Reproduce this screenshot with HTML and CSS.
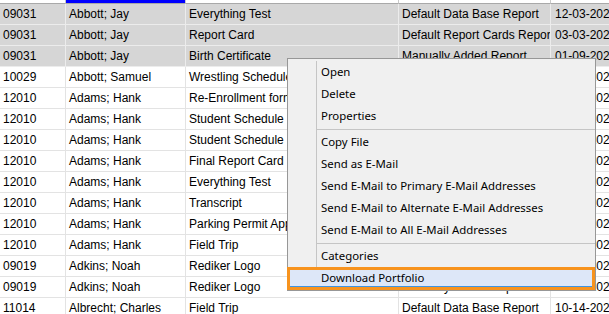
FILE: index.html
```html
<!DOCTYPE html>
<html lang="en">
<head>
    <meta charset="UTF-8">
    <meta name="viewport" content="width=device-width, initial-scale=1.0">
    <title>Student Reports</title>
    <link rel="stylesheet" href="styles.css">
</head>
<body>

    <div class="grid">
        <!-- Header strip (mostly scrolled away) -->
        <div class="row head">
            <div class="cell"></div>
            <div class="cell sorted"></div>
            <div class="cell"></div>
            <div class="cell"></div>
            <div class="cell"></div>
        </div>

        <div class="row sel">
            <div class="cell">09031</div>
            <div class="cell">Abbott; Jay</div>
            <div class="cell">Everything Test</div>
            <div class="cell">Default Data Base Report</div>
            <div class="cell">12-03-2020</div>
        </div>
        <div class="row sel">
            <div class="cell">09031</div>
            <div class="cell">Abbott; Jay</div>
            <div class="cell">Report Card</div>
            <div class="cell">Default Report Cards Report</div>
            <div class="cell">03-03-2021</div>
        </div>
        <div class="row sel">
            <div class="cell">09031</div>
            <div class="cell">Abbott; Jay</div>
            <div class="cell">Birth Certificate</div>
            <div class="cell">Manually Added Report</div>
            <div class="cell">01-09-2021</div>
        </div>
        <div class="row">
            <div class="cell">10029</div>
            <div class="cell">Abbott; Samuel</div>
            <div class="cell">Wrestling Schedule</div>
            <div class="cell">Manually Added Report</div>
            <div class="cell">10-14-2021</div>
        </div>
        <div class="row">
            <div class="cell">12010</div>
            <div class="cell">Adams; Hank</div>
            <div class="cell">Re-Enrollment form</div>
            <div class="cell">Manually Added Report</div>
            <div class="cell">10-14-2021</div>
        </div>
        <div class="row">
            <div class="cell">12010</div>
            <div class="cell">Adams; Hank</div>
            <div class="cell">Student Schedule</div>
            <div class="cell">Default Data Base Report</div>
            <div class="cell">10-14-2021</div>
        </div>
        <div class="row">
            <div class="cell">12010</div>
            <div class="cell">Adams; Hank</div>
            <div class="cell">Student Schedule</div>
            <div class="cell">Default Data Base Report</div>
            <div class="cell">10-14-2021</div>
        </div>
        <div class="row">
            <div class="cell">12010</div>
            <div class="cell">Adams; Hank</div>
            <div class="cell">Final Report Card</div>
            <div class="cell">Default Report Cards Report</div>
            <div class="cell">10-14-2021</div>
        </div>
        <div class="row">
            <div class="cell">12010</div>
            <div class="cell">Adams; Hank</div>
            <div class="cell">Everything Test</div>
            <div class="cell">Default Data Base Report</div>
            <div class="cell">10-14-2021</div>
        </div>
        <div class="row">
            <div class="cell">12010</div>
            <div class="cell">Adams; Hank</div>
            <div class="cell">Transcript</div>
            <div class="cell">Default Data Base Report</div>
            <div class="cell">10-14-2021</div>
        </div>
        <div class="row">
            <div class="cell">12010</div>
            <div class="cell">Adams; Hank</div>
            <div class="cell">Parking Permit Application</div>
            <div class="cell">Manually Added Report</div>
            <div class="cell">10-14-2021</div>
        </div>
        <div class="row">
            <div class="cell">12010</div>
            <div class="cell">Adams; Hank</div>
            <div class="cell">Field Trip</div>
            <div class="cell">Default Data Base Report</div>
            <div class="cell">10-14-2021</div>
        </div>
        <div class="row">
            <div class="cell">09019</div>
            <div class="cell">Adkins; Noah</div>
            <div class="cell">Rediker Logo</div>
            <div class="cell">Manually Added Report</div>
            <div class="cell">10-14-2021</div>
        </div>
        <div class="row">
            <div class="cell">09019</div>
            <div class="cell">Adkins; Noah</div>
            <div class="cell">Rediker Logo</div>
            <div class="cell">Manually Added Report</div>
            <div class="cell">10-14-2021</div>
        </div>
        <div class="row">
            <div class="cell">11014</div>
            <div class="cell">Albrecht; Charles</div>
            <div class="cell">Field Trip</div>
            <div class="cell">Default Data Base Report</div>
            <div class="cell">10-14-2021</div>
        </div>
    </div>

    <!-- Right-click menu -->
    <ul class="context-menu">
        <li>Open</li>
        <li>Delete</li>
        <li>Properties</li>
        <li class="sep"></li>
        <li>Copy File</li>
        <li>Send as E-Mail</li>
        <li>Send E-Mail to Primary E-Mail Addresses</li>
        <li>Send E-Mail to Alternate E-Mail Addresses</li>
        <li>Send E-Mail to All E-Mail Addresses</li>
        <li class="sep"></li>
        <li>Categories</li>
        <li class="hot">Download Portfolio</li>
    </ul>

</body>
</html>
```

FILE: styles.css
```css
body {
    margin: 0;
    padding: 0;
    width: 609px;
    height: 314px;
    overflow: hidden;
    position: relative;
    background-color: #fff;
    font-family: "Liberation Sans", Arial, sans-serif;
    font-size: 12px;
    color: #000;
}

.grid {
    width: 700px;
}

.row {
    display: grid;
    grid-template-columns: 66px 120px 213px 152px 149px;
    height: 21px;
}

.cell {
    box-sizing: border-box;
    height: 21px;
    line-height: 20px;
    padding-left: 3px;
    border-right: 1px solid #e3e3e3;
    border-bottom: 1px solid #e3e3e3;
    white-space: nowrap;
    overflow: hidden;
}

.row .cell:last-child {
    padding-left: 4px;
}

.row.head {
    height: 4px;
}

.row.head .cell {
    height: 4px;
    border-right-color: #c9c9c9;
    border-bottom-color: #a9a9a9;
}

.row.head .cell.sorted {
    background-color: #0000ff;
}

.row.sel .cell {
    background-color: #d6d6d6;
    border-color: #ececec;
}

/* context menu */
.context-menu {
    position: absolute;
    left: 287px;
    top: 58px;
    width: 307px;
    margin: 0;
    padding: 2px 0 1px;
    list-style: none;
    background-color: #f0f0f0;
    border: 1px solid #979797;
    font-family: "Noto Sans", "Open Sans", sans-serif;
    font-size: 11.4px;
}

.context-menu::before {
    content: "";
    position: absolute;
    left: 28px;
    top: 2px;
    bottom: 1px;
    width: 1px;
    background-color: #c5c5c5;
}

.context-menu li {
    position: relative;
    height: 22px;
    line-height: 22px;
    padding-left: 33px;
    white-space: nowrap;
}

.context-menu li.sep {
    height: 4px;
    padding: 0;
}

.context-menu li.sep::before {
    content: "";
    position: absolute;
    left: 28px;
    right: 0;
    top: 2px;
    height: 1px;
    background-color: #c5c5c5;
}

.context-menu li.hot {
    background-color: #dde7f8;
}

.context-menu li.hot::after {
    content: "";
    position: absolute;
    left: -1px;
    right: 0;
    top: 0;
    bottom: -1px;
    border: 3px solid #f7931e;
    box-shadow: inset 0 -1px 0 #3d94e3;
}
```
